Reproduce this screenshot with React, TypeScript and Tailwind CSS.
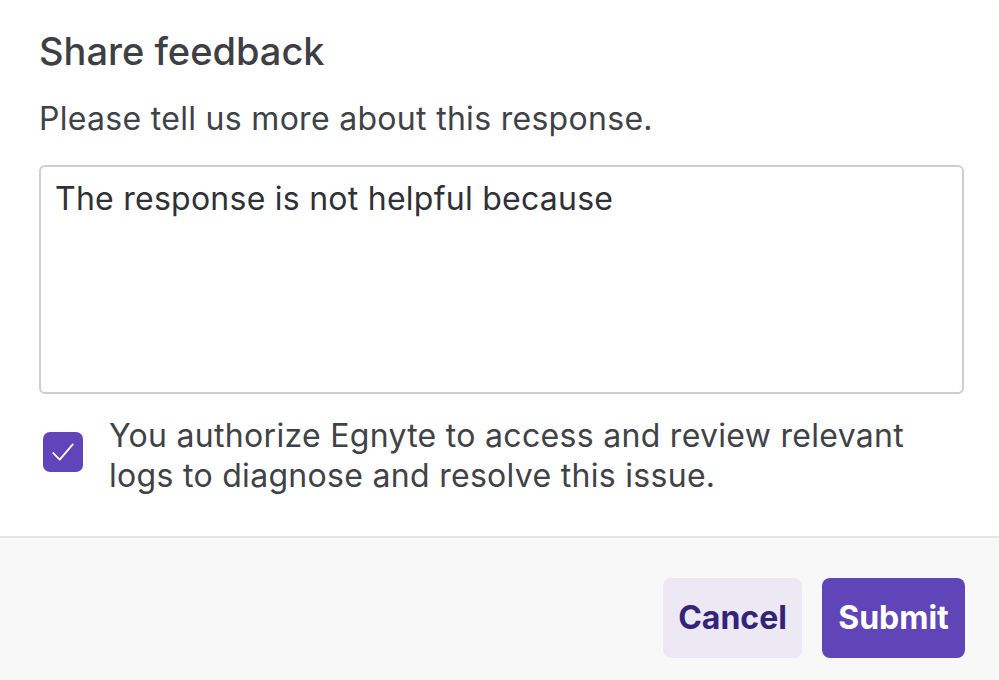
import React from "react";

export default function App() {
  return (
    <div
      className="w-[999px] h-[680px] bg-white flex flex-col overflow-hidden text-[#404247]"
      style={{ fontFamily: "Inter, 'Noto Sans', sans-serif" }}
    >
      <div className="flex flex-col px-[39px] pt-[28px] pb-[40px]">
        <h2 className="text-[38px] leading-[46px] font-medium text-[#3d3f44]">Share feedback</h2>
        <p className="mt-[27px] text-[32px] leading-[36px] tracking-[0.3px]">Please tell us more about this response.</p>
        <textarea
          defaultValue="The response is not helpful because"
          className="mt-[28px] h-[229px] w-[925px] resize-none rounded-[6px] border-2 border-[#cdced1] px-[14px] pt-[12px] text-[32px] leading-[40px] tracking-[0.25px] text-[#2f3136] outline-none"
          style={{ fontFamily: "Inter, 'Noto Sans', sans-serif" }}
        />
        <label className="mt-[20px] flex items-start">
          <span className="ml-[4px] mt-[18px] flex h-[40px] w-[40px] shrink-0 items-center justify-center rounded-[7px] bg-[#5f45b9]">
            <svg width="26" height="26" viewBox="0 0 24 24" fill="none" stroke="#ffffff" strokeWidth="1.7" strokeLinecap="round" strokeLinejoin="round">
              <path d="M3 13 L9 19 L21 5" />
            </svg>
          </span>
          <span className="ml-[26px] mt-[2px] text-[32px] leading-[40px] tracking-[0.3px]">
            You authorize Egnyte to access and review relevant
            <br />
            logs to diagnose and resolve this issue.
          </span>
        </label>
      </div>
      <div className="flex flex-1 justify-end gap-[20px] border-t-2 border-[#e6e6e8] bg-[#f8f8f9] pr-[34px] pt-[40px]">
        <button className="h-[80px] w-[139px] rounded-[8px] bg-[#ece9f5] text-[32px] font-bold text-[#33247a]">
          Cancel
        </button>
        <button className="h-[80px] w-[143px] rounded-[8px] bg-[#6045b8] text-[32px] font-bold text-white">
          Submit
        </button>
      </div>
    </div>
  );
}
